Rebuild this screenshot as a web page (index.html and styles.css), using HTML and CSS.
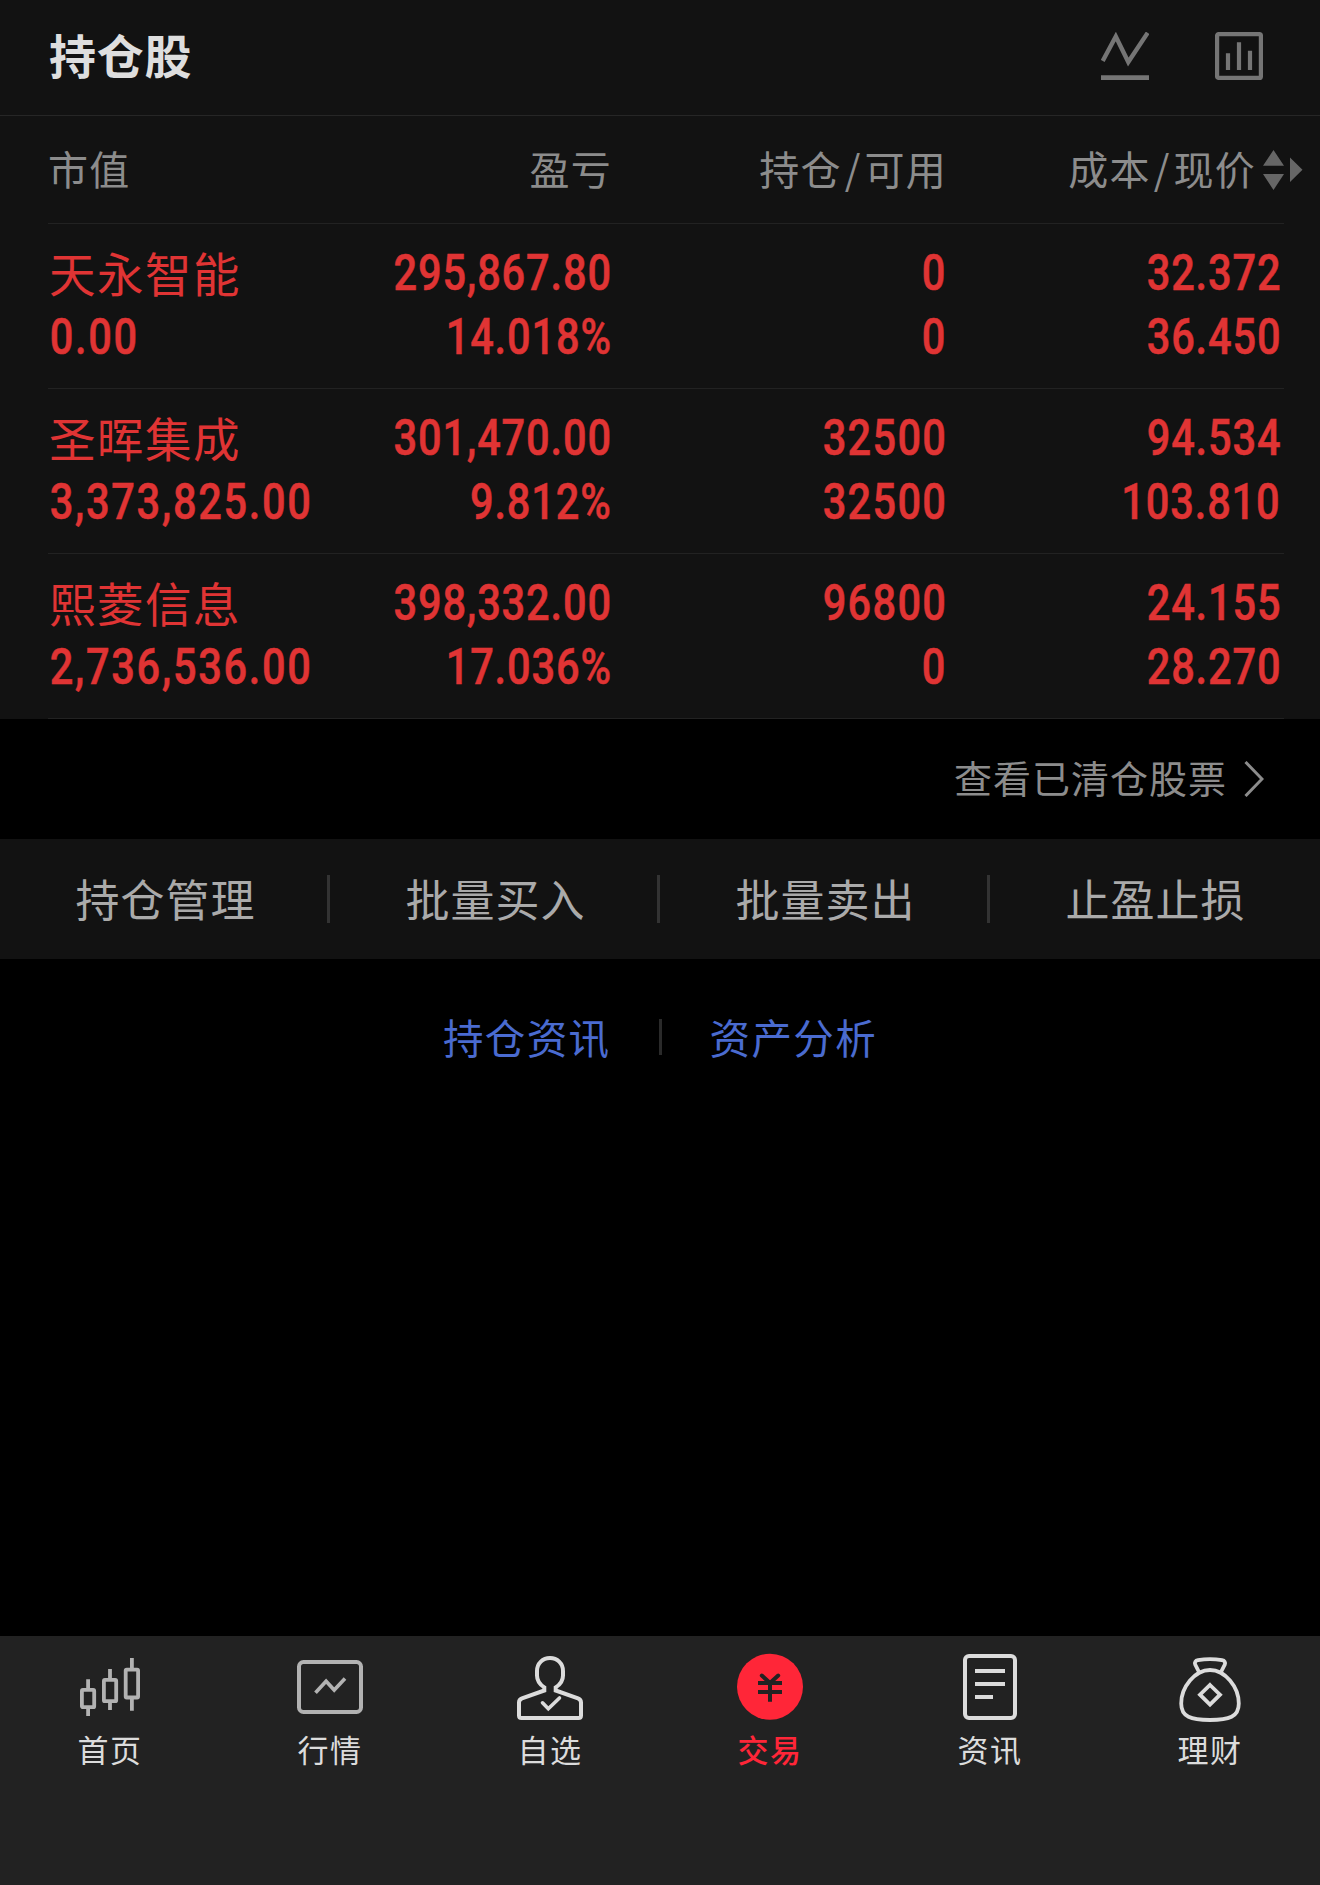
FILE: index.html
```html
<!DOCTYPE html>
<html lang="zh-CN">
<head>
<meta charset="utf-8">
<title>持仓股</title>
<link rel="stylesheet" href="styles.css">
</head>
<body>
<div class="app">
  <header class="header">
    <h1 class="title">持仓股</h1>
    <div class="tools">
      <svg class="tool" viewBox="0 0 48 48" fill="none" stroke="currentColor"><path stroke-width="4.4" d="M1.7 29 14.8 4.5 27.3 30 46.7.8"/><path stroke-width="4.6" d="M0 45.6h48"/></svg>
      <svg class="tool" viewBox="0 0 48 48" fill="none" stroke="currentColor" stroke-width="4.2"><rect x="2.1" y="2.1" width="43.8" height="43.8" rx="1.5"/><path d="M13 21.3V38M24 10.3V38M35 18.7V38"/></svg>
    </div>
  </header>

  <main class="main">
    <section class="holdings">
      <div class="thead">
        <span>市值</span><span>盈亏</span><span>持仓<i class="slash">/</i>可用</span>
        <span class="sort"><span>成本<i class="slash">/</i>现价</span>
          <svg class="sort-icon" viewBox="0 0 40 40" fill="currentColor"><path d="M0 15.8 10.5 0 21 15.8zM0 24h21L10.5 40zM27 7.5 39.5 19.7 27 32z"/></svg>
        </span>
      </div>
      <div class="row">
        <div class="cell first"><span class="name">天永智能</span><span class="num">0.00</span></div>
        <div class="cell"><span class="num">295,867.80</span><span class="num">14.018%</span></div>
        <div class="cell qty"><span class="num">0</span><span class="num">0</span></div>
        <div class="cell price"><span class="num">32.372</span><span class="num">36.450</span></div>
      </div>
      <div class="row">
        <div class="cell first"><span class="name">圣晖集成</span><span class="num">3,373,825.00</span></div>
        <div class="cell"><span class="num">301,470.00</span><span class="num">9.812%</span></div>
        <div class="cell qty"><span class="num">32500</span><span class="num">32500</span></div>
        <div class="cell price"><span class="num">94.534</span><span class="num">103.810</span></div>
      </div>
      <div class="row">
        <div class="cell first"><span class="name">熙菱信息</span><span class="num">2,736,536.00</span></div>
        <div class="cell"><span class="num">398,332.00</span><span class="num">17.036%</span></div>
        <div class="cell qty"><span class="num">96800</span><span class="num">0</span></div>
        <div class="cell price"><span class="num">24.155</span><span class="num">28.270</span></div>
      </div>
    </section>

    <a class="cleared"><span>查看已清仓股票</span>
      <svg class="chevron" viewBox="0 0 20 36" fill="none" stroke="currentColor" stroke-width="3"><path d="M1.5 1 18 18 1.5 35"/></svg>
    </a>

    <nav class="actions">
      <a>持仓管理</a><a>批量买入</a><a>批量卖出</a><a>止盈止损</a>
    </nav>

    <div class="links"><a>持仓资讯</a><i class="bar"></i><a>资产分析</a></div>
  </main>

  <nav class="tabs">
    <a class="tab">
      <svg class="tab-icon dim" viewBox="0 0 66 74" stroke-width="3.8"><rect x="4.9" y="39.9" width="12.3" height="17.3" rx="1"/><rect x="26.9" y="29.9" width="12.3" height="21.3" rx="1"/><rect x="48.7" y="19.6" width="12.4" height="27.9" rx="1"/><path d="M11.1 29.3V39M11.1 58v8M33 19v10M33 52v8M54.9 8v11M54.9 48v12.8"/></svg>
      <span>首页</span>
    </a>
    <a class="tab">
      <svg class="tab-icon dim" viewBox="0 0 66 74" stroke-width="4"><rect x="2" y="12" width="62" height="50" rx="4.5"/><path stroke-width="3.6" d="M18.5 42.8 29.1 31.2 37.2 40 48 28.6"/></svg>
      <span>行情</span>
    </a>
    <a class="tab">
      <svg class="tab-icon" viewBox="0 0 66 74" stroke-width="4"><path d="M27.3 40.5V37.4C22 34 20 29.5 20 25.5V21C20 13.2 25.8 8 33 8S46 13.2 46 21V25.5C46 29.5 44 34 38.7 37.4V40.5L61 48.3Q64 49.5 64 52.5V65.5Q64 68 61.5 68H4.5Q2 68 2 65.5V52.5Q2 49.5 5 48.3Z"/><path d="M25.5 52.8 31.3 58.8 42.5 48" stroke-linecap="round" stroke-width="3.6"/></svg>
      <span>自选</span>
    </a>
    <a class="tab active">
      <svg class="tab-icon" viewBox="0 0 66 74" stroke-width="4"><circle cx="33" cy="36.7" r="33" fill="currentColor" stroke="none"/><g stroke="#222"><path d="M24.8 25.5 33 33 41.2 25.5" stroke-linecap="round"/><path d="M21 33h24M21 42h24M33 32v19.7"/></g></svg>
      <span>交易</span>
    </a>
    <a class="tab">
      <svg class="tab-icon" viewBox="0 0 66 74" stroke-width="4"><rect x="8" y="6" width="50" height="62" rx="4"/><path d="M18 21h30M18 34h30M18 47h18"/></svg>
      <span>资讯</span>
    </a>
    <a class="tab">
      <svg class="tab-icon" viewBox="0 0 66 74" stroke-width="3.8"><path d="M33 20C18 20 4.2 37 4.2 53.5C4.2 67 14 70 33 70S61.8 67 61.8 53.5C61.8 37 48 20 33 20Z"/><path d="M22 22 18.2 14.5Q17 11 21 10.2Q33 8 45 10.2Q49 11 47.8 14.5L44 22"/><path d="M33 35 43 44.7 33 54.5 23 44.7Z"/></svg>
      <span>理财</span>
    </a>
  </nav>
</div>
</body>
</html>
```
FILE: styles.css
```css
* { box-sizing: border-box; }

body {
  margin: 0;
  background: #000;
  font-family: "Noto Sans CJK SC", sans-serif;
}

.app {
  display: flex;
  flex-direction: column;
  height: 1885px;
}

.header {
  display: flex;
  justify-content: space-between;
  align-items: center;
  height: 116px;
  padding: 0 57px 4px 49px;
  background: #121212;
  border-bottom: 1px solid #262626;
}

.title {
  margin: 0 0 4px;
  font-size: 47px;
  line-height: 60px;
  letter-spacing: 0.8px;
  font-weight: 700;
  color: #dedede;
}

.tools { display: flex; gap: 66px; color: #757575; }
.tool { width: 48px; height: 48px; }

.main { flex: 1; }

.holdings {
  padding: 0 36px 0 48px;
  background: #121212;
}

.thead,
.row {
  display: grid;
  grid-template-columns: 282px 282px 335px 1fr;
  border-bottom: 1px solid #222;
  text-align: right;
}

.thead {
  height: 108px;
  line-height: 105px;
  font-size: 40px;
  letter-spacing: 1.2px;
  color: #8c8c8c;
}
.thead span:first-child { text-align: left; }
.slash { margin: 0 3px; font-style: normal; }

.sort {
  display: flex;
  justify-content: flex-end;
  gap: 7px;
  margin-right: -19px;
}
.sort-icon { width: 40px; height: 40px; margin-top: 34px; color: #666; }

.row {
  height: 165px;
  padding-top: 17px;
  color: #e03434;
}

.cell {
  display: flex;
  flex-direction: column;
  align-items: flex-end;
}
.cell.first { align-items: flex-start; }

.name {
  height: 64px;
  padding-left: 1px;
  font-size: 46.5px;
  line-height: 61px;
  letter-spacing: 1.5px;
}

.num {
  font-family: Roboto, sans-serif;
  font-size: 49.5px;
  font-weight: 500;
  line-height: 64px;
  letter-spacing: 1px;
  -webkit-text-stroke: 0.5px currentColor;
  transform: scaleX(0.84);
  transform-origin: right center;
}
.first .num {
  padding-left: 2px;
  letter-spacing: 2px;
  transform-origin: left center;
}
.qty .num { letter-spacing: 1.5px; }
.price { padding-right: 3px; }

.cleared {
  display: flex;
  justify-content: flex-end;
  align-items: center;
  gap: 17px;
  height: 120px;
  padding-right: 56px;
  font-size: 38px;
  letter-spacing: 1px;
  color: #8c8c8c;
}
.cleared span { margin-bottom: 5px; }
.chevron { width: 20px; height: 36px; }

.actions {
  display: grid;
  grid-template-columns: repeat(4, 1fr);
  align-items: center;
  height: 120px;
  background: #121212;
}
.actions a {
  height: 48px;
  border-right: 3px solid #333;
  padding-left: 4px;
  text-align: center;
  font-size: 44px;
  line-height: 46px;
  letter-spacing: 1px;
  color: #aaa;
}
.actions a:last-child { border-color: transparent; }

.links {
  display: flex;
  justify-content: center;
  align-items: center;
  gap: 48px;
  margin-top: 46px;
  font-size: 40.5px;
  line-height: 64px;
  letter-spacing: 1.4px;
  color: #4a6bd0;
}
.bar { width: 3px; height: 36px; background: #2a2a2a; }

.tabs {
  display: grid;
  grid-template-columns: repeat(6, 1fr);
  height: 249px;
  padding-top: 14px;
  background: #222;
}
.tab {
  display: flex;
  flex-direction: column;
  align-items: center;
  font-size: 31px;
  line-height: 49px;
  letter-spacing: 1.5px;
  color: #dcdcdc;
}
.tab-icon {
  width: 66px;
  height: 74px;
  fill: none;
  stroke: currentColor;
}
.dim { color: #b2b2b2; }
.active { color: #ff2638; font-weight: 500; }
```
